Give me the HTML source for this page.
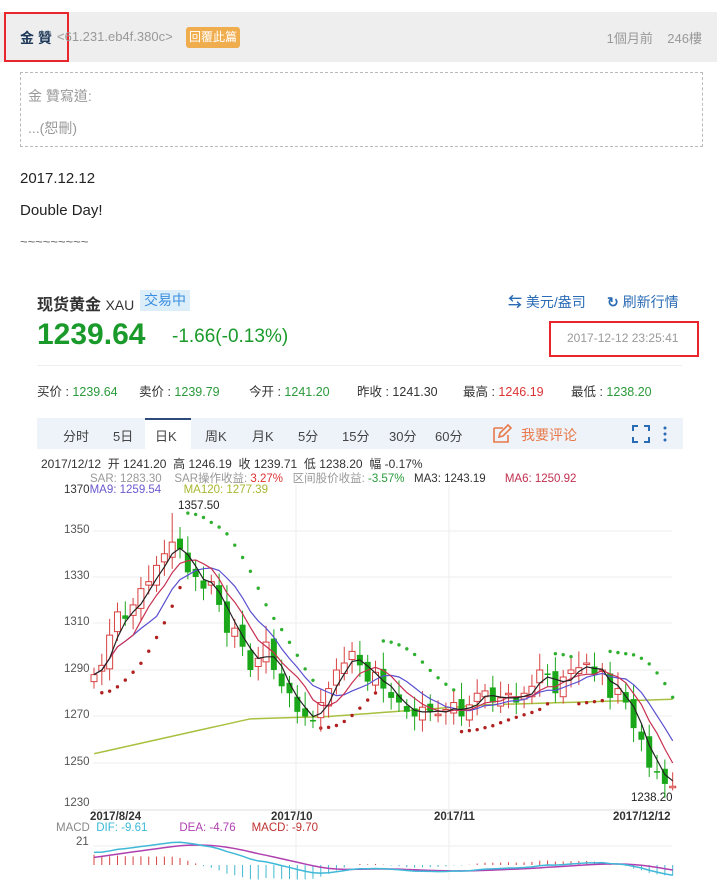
<!DOCTYPE html>
<html><head><meta charset="utf-8">
<style>
*{margin:0;padding:0;box-sizing:border-box}
body{width:720px;height:880px;overflow:hidden;background:#fff;font-family:"Liberation Sans","Noto Sans CJK TC",sans-serif;position:relative}
.a{position:absolute;white-space:nowrap}
.sc{font-family:"Liberation Sans","Noto Sans CJK SC",sans-serif}
</style></head><body>
<div class="a" style="left:0;top:12px;width:717px;height:50px;background:#eeeeee"></div>
<div class="a" style="left:4px;top:12px;width:65px;height:50px;border:2px solid #e8262c"></div>
<div class="a" style="left:20px;top:28px;font-size:14px;font-weight:bold;color:#1f3a5a">金 贊</div>
<div class="a" style="left:57px;top:29px;font-size:13px;color:#999">&lt;61.231.eb4f.380c&gt;</div>
<div class="a" style="left:186px;top:27px;width:54px;height:21px;background:#f0ad4e;border-radius:3px;color:#fff;font-size:12px;line-height:21px;text-align:center">回覆此篇</div>
<div class="a" style="right:18px;top:28px;font-size:13px;color:#999">1個月前&nbsp;&nbsp;&nbsp;&nbsp;246樓</div>
<div class="a" style="left:20px;top:72px;width:683px;height:75px;border:1px dashed #bbb"></div>
<div class="a" style="left:28px;top:86px;font-size:14px;color:#999">金 贊寫道:</div>
<div class="a" style="left:28px;top:118px;font-size:14px;color:#999">...(恕刪)</div>
<div class="a" style="left:20px;top:170px;font-size:15px;color:#222">2017.12.12</div>
<div class="a" style="left:20px;top:202px;font-size:15px;color:#222">Double Day!</div>
<div class="a" style="left:20px;top:234px;font-size:13px;color:#666">~~~~~~~~~</div>

<div class="a sc" style="left:37px;top:291px;font-size:16px;font-weight:bold;color:#333">现货黄金 <span style="font-weight:normal;font-size:14px">XAU</span></div>
<div class="a sc" style="left:140px;top:290px;width:50px;height:21px;background:#ddeefb;color:#3a8ee0;font-size:14px;line-height:21px;text-align:center">交易中</div>
<div class="a sc" style="left:508px;top:292px;font-size:14px;color:#2a6bb5"><b>⇆</b> 美元/盎司</div>
<div class="a sc" style="left:607px;top:292px;font-size:14px;color:#2a6bb5"><b>↻</b> 刷新行情</div>
<div class="a" style="left:37px;top:318px;font-size:30px;font-weight:bold;color:#1a9a2a">1239.64</div>
<div class="a" style="left:172px;top:326px;font-size:19px;color:#1a9a2a">-1.66(-0.13%)</div>
<div class="a" style="left:549px;top:321px;width:150px;height:36px;border:2px solid #e8262c"></div>
<div class="a" style="left:567px;top:331px;font-size:12px;color:#999">2017-12-12 23:25:41</div>
<div class="a" style="left:37px;top:365px;width:645px;height:1px;background:#eee"></div>
<div class="a sc" style="left:37px;top:381px;font-size:12.5px;color:#333">买价 : <span style="color:#2a9a3a">1239.64</span></div>
<div class="a sc" style="left:139px;top:381px;font-size:12.5px;color:#333">卖价 : <span style="color:#2a9a3a">1239.79</span></div>
<div class="a sc" style="left:249px;top:381px;font-size:12.5px;color:#333">今开 : <span style="color:#2a9a3a">1241.20</span></div>
<div class="a sc" style="left:357px;top:381px;font-size:12.5px;color:#333">昨收 : 1241.30</div>
<div class="a sc" style="left:463px;top:381px;font-size:12.5px;color:#333">最高 : <span style="color:#d33">1246.19</span></div>
<div class="a sc" style="left:571px;top:381px;font-size:12.5px;color:#333">最低 : <span style="color:#2a9a3a">1238.20</span></div>

<div class="a" style="left:37px;top:418px;width:646px;height:31px;background:#eef3fa"></div>
<div class="a" style="left:145px;top:418px;width:46px;height:32px;background:#fff;border-top:2px solid #2c4a7a"></div>
<div class="a sc" style="left:0;top:426px;font-size:13px;color:#444;width:720px;height:20px">
<span class="a" style="left:63px">分时</span><span class="a" style="left:113px">5日</span><span class="a" style="left:155px">日K</span><span class="a" style="left:205px">周K</span><span class="a" style="left:252px">月K</span><span class="a" style="left:298px">5分</span><span class="a" style="left:342px">15分</span><span class="a" style="left:389px">30分</span><span class="a" style="left:435px">60分</span>
<span class="a" style="left:521px;top:-1px;font-size:14px;color:#e8794a">我要评论</span></div>
<svg class="a" style="left:491px;top:424px" width="22" height="20"><path d="M3 4h9M3 4v14h14v-7" stroke="#e8794a" stroke-width="1.6" fill="none"/><path d="M8 13l1-4 8-8 3 3-8 8z" stroke="#e8794a" stroke-width="1.6" fill="none"/></svg>
<svg class="a" style="left:632px;top:425px" width="40" height="18"><path d="M1 6V1h5M12 1h5v5M17 12v5h-5M6 17H1v-5" stroke="#2a6bb5" stroke-width="2" fill="none"/><circle cx="33" cy="3" r="1.5" fill="#2a6bb5"/><circle cx="33" cy="9" r="1.5" fill="#2a6bb5"/><circle cx="33" cy="15" r="1.5" fill="#2a6bb5"/></svg>

<div class="a sc" style="left:41px;top:455px;font-size:12px;color:#333">2017/12/12&nbsp; 开 1241.20&nbsp; 高 1246.19&nbsp; 收 1239.71&nbsp; 低 1238.20&nbsp; 幅 -0.17%</div>
<div class="a sc" style="left:90px;top:470px;font-size:11.5px;color:#999">SAR: 1283.30&nbsp;&nbsp;&nbsp; SAR操作收益: <span style="color:#d33">3.27%</span>&nbsp;&nbsp; 区间股价收益: <span style="color:#2a9a3a">-3.57%</span>&nbsp;&nbsp; <span style="color:#333">MA3: 1243.19</span>&nbsp;&nbsp;&nbsp;&nbsp;&nbsp; <span style="color:#c03050">MA6: 1250.92</span></div>
<div class="a" style="left:64px;top:484px;font-size:11.5px;color:#333">1370<span style="color:#6a5acd">MA9: 1259.54</span>&nbsp;&nbsp;&nbsp;&nbsp;&nbsp;&nbsp; <span style="color:#a8b830">MA120: 1277.39</span></div>
<div class="a" style="left:64px;top:524px;font-size:11.5px;color:#555">1350</div>
<div class="a" style="left:64px;top:570px;font-size:11.5px;color:#555">1330</div>
<div class="a" style="left:64px;top:616px;font-size:11.5px;color:#555">1310</div>
<div class="a" style="left:64px;top:663px;font-size:11.5px;color:#555">1290</div>
<div class="a" style="left:64px;top:709px;font-size:11.5px;color:#555">1270</div>
<div class="a" style="left:64px;top:756px;font-size:11.5px;color:#555">1250</div>
<div class="a" style="left:64px;top:797px;font-size:11.5px;color:#555">1230</div>
<div class="a" style="left:178px;top:500px;font-size:11.5px;color:#222">1357.50</div>
<div class="a" style="left:631px;top:792px;font-size:11.5px;color:#222">1238.20</div>
<div class="a" style="left:90px;top:811px;font-size:11.5px;font-weight:bold;color:#333">2017/8/24</div>
<div class="a" style="left:271px;top:811px;font-size:11.5px;font-weight:bold;color:#333">2017/10</div>
<div class="a" style="left:434px;top:811px;font-size:11.5px;font-weight:bold;color:#333">2017/11</div>
<div class="a" style="left:613px;top:811px;font-size:11.5px;font-weight:bold;color:#333">2017/12/12</div>
<div class="a" style="left:56px;top:822px;font-size:11.5px;color:#888">MACD&nbsp; <span style="color:#3ab8d8">DIF: -9.61</span>&nbsp;&nbsp;&nbsp;&nbsp;&nbsp;&nbsp;&nbsp;&nbsp;&nbsp; <span style="color:#b040b0">DEA: -4.76</span>&nbsp;&nbsp;&nbsp;&nbsp; <span style="color:#c03030">MACD: -9.70</span></div>
<div class="a" style="left:76px;top:836px;font-size:11.5px;color:#555">21</div>
<svg id="ch" class="a" style="left:0;top:0" width="720" height="880"></svg>
<script>
var C=[1288,1292,1305,1315,1312,1318,1325,1328,1335,1340,1345,1342,1332,1330,1325,1328,1318,1306,1308,1300,1290,1295,1302,1290,1283,1280,1272,1270,1268,1276,1282,1290,1293,1298,1292,1285,1289,1282,1278,1276,1272,1270,1274,1272,1271,1273,1276,1270,1275,1280,1281,1276,1278,1280,1276,1280,1283,1290,1288,1280,1287,1290,1291,1293,1288,1290,1278,1282,1276,1265,1260,1248,1246,1241,1240];
function Y(p){return 670-(p-1290)*2.325}function X(i){return 94+i*7.82}
var s='';
[531,577,623,670,716,763].forEach(function(y){s+='<line x1="93" x2="672" y1="'+y+'" y2="'+y+'" stroke="#eee"/>'});
s+='<line x1="93" x2="672" y1="810" y2="810" stroke="#ddd"/>';
[296,449].forEach(function(x){s+='<line x1="'+x+'" x2="'+x+'" y1="485" y2="880" stroke="#eee"/>'});
s+='<line x1="93" x2="672" y1="846" y2="846" stroke="#eee"/>';
var O=[],H=[],L=[];
for(var i=0;i<C.length;i++){var o=i?C[i-1]+((i%2)?1.5:-1.5):1285;O.push(o);H.push(Math.max(o,C[i])+3+(i*7%5));L.push(Math.min(o,C[i])-3-(i*3%4));}
H[10]=1357.5;L[74]=1238.2;
var m='';for(var i=0;i<75;i++){var v=i<20?1254+i*0.75:(i<30?1269+(i-20)*0.1:(i<50?1270+(i-30)*0.25:1275+(i-50)*0.1));m+=(i?'L':'M')+X(i)+' '+Y(v);}
s+='<path d="'+m+'" stroke="#a8c040" stroke-width="1.5" fill="none"/>';
function ma(n,col){var d='';for(var i=0;i<75;i++){var a=0,k=0;for(var j=Math.max(0,i-n+1);j<=i;j++){a+=C[j];k++;}d+=(i?'L':'M')+X(i).toFixed(1)+' '+Y(a/k).toFixed(1);}s+='<path d="'+d+'" stroke="'+col+'" stroke-width="1.2" fill="none"/>';}
var up=true,af=.02,ep=H[0],sar=L[0]-2;
for(var i=1;i<75;i++){sar=sar+af*(ep-sar);if(up){if(L[i]<sar){up=false;sar=ep;ep=L[i];af=.02;}else if(H[i]>ep){ep=H[i];af=Math.min(.2,af+.02);}}else{if(H[i]>sar){up=true;sar=ep;ep=H[i];af=.02;}else if(L[i]<ep){ep=L[i];af=Math.min(.2,af+.02);}}
s+='<circle cx="'+X(i)+'" cy="'+Y(sar)+'" r="1.7" fill="'+(up?'#b02020':'#30b030')+'"/>';}
for(var i=0;i<75;i++){var x=X(i),o=O[i],c=C[i],u=c>=o;var col=u?'#d84040':'#1aa81a';
s+='<line x1="'+x+'" x2="'+x+'" y1="'+Y(H[i])+'" y2="'+Y(L[i])+'" stroke="'+col+'"/>';
var t=Y(Math.max(o,c)),b=Y(Math.min(o,c));s+='<rect x="'+(x-3)+'" y="'+t+'" width="6" height="'+Math.max(1.5,b-t)+'" fill="'+(u?'#fff':col)+'" stroke="'+col+'" stroke-width="'+(u?1:0)+'"/>';}
ma(9,'#5a50d0');ma(6,'#c83050');ma(3,'#222');
var e12=C[0]-12,e26=C[0]-24,dea=6,dd='',de='',hh='';
for(var i=0;i<75;i++){e12=e12+(C[i]-e12)*2/13;e26=e26+(C[i]-e26)*2/27;var dif=e12-e26;dea=dea+(dif-dea)*2/10;var h=2*(dif-dea);
dd+=(i?'L':'M')+X(i)+' '+(865-dif*1.05);de+=(i?'L':'M')+X(i)+' '+(865-dea*1.05);
hh+='<line x1="'+X(i)+'" x2="'+X(i)+'" y1="865" y2="'+(865-h*1.05)+'" stroke="'+(h>0?'#d84040':'#40b8d0')+'"/>';}
s+=hh+'<path d="'+de+'" stroke="#b040b0" stroke-width="1.5" fill="none"/><path d="'+dd+'" stroke="#40b8d8" stroke-width="1.5" fill="none"/>';
document.getElementById('ch').innerHTML=s;
</script>
</body></html>
